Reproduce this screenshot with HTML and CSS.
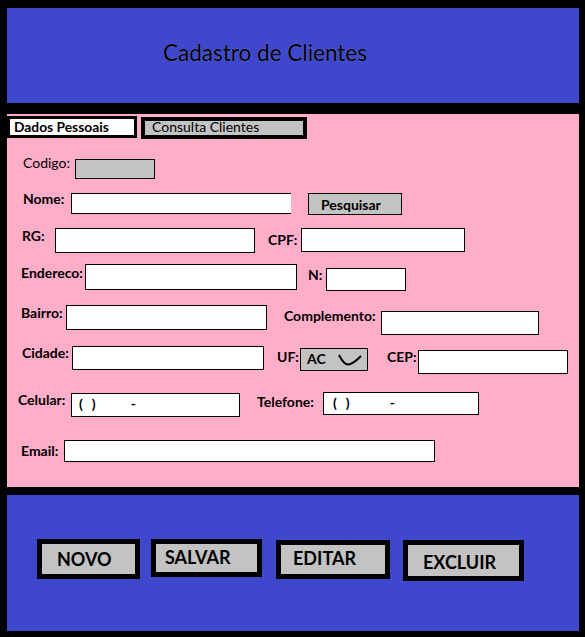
FILE: index.html
```html
<!DOCTYPE html>
<html lang="pt-BR">
<head>
<meta charset="utf-8">
<title>Cadastro de Clientes</title>
<link rel="stylesheet" href="styles.css">
</head>
<body>
<div class="frame">
  <header class="top">
    <h1 class="title">Cadastro de Clientes</h1>
  </header>

  <section class="form">
    <div class="tabs">
      <div class="tab tab-active">Dados Pessoais</div>
      <div class="tab tab-other">Consulta Clientes</div>
    </div>

    <div class="row r-codigo">
      <span class="lbl lbl-reg l-codigo">Codigo:</span>
      <div class="box box-grey f-codigo"></div>
    </div>

    <div class="row r-nome">
      <span class="lbl l-nome">Nome:</span>
      <div class="box f-nome"></div>
      <div class="btn-pesquisar">Pesquisar</div>
    </div>

    <div class="row r-rg">
      <span class="lbl l-rg">RG:</span>
      <div class="box f-rg"></div>
      <span class="lbl l-cpf">CPF:</span>
      <div class="box f-cpf"></div>
    </div>

    <div class="row r-end">
      <span class="lbl l-end">Endereco:</span>
      <div class="box f-end"></div>
      <span class="lbl l-num">N:</span>
      <div class="box f-num"></div>
    </div>

    <div class="row r-bairro">
      <span class="lbl l-bairro">Bairro:</span>
      <div class="box f-bairro"></div>
      <span class="lbl l-compl">Complemento:</span>
      <div class="box f-compl"></div>
    </div>

    <div class="row r-cidade">
      <span class="lbl l-cidade">Cidade:</span>
      <div class="box f-cidade"></div>
      <span class="lbl l-uf">UF:</span>
      <div class="box box-grey f-uf">
        <span class="uf-val">AC</span>
        <svg class="uf-arrow" width="24" height="12" viewBox="0 0 24 12"><path d="M1 1 C3 5 6 10.5 10 10.5 C14 10.5 19 6 23 2" fill="none" stroke="#000" stroke-width="2"/></svg>
      </div>
      <span class="lbl l-cep">CEP:</span>
      <div class="box f-cep"></div>
    </div>

    <div class="row r-cel">
      <span class="lbl l-cel">Celular:</span>
      <div class="box phone f-cel"><span class="p-open">(</span><span class="p-close">)</span><span class="p-dash">-</span></div>
      <span class="lbl l-tel">Telefone:</span>
      <div class="box phone f-tel"><span class="p-open">(</span><span class="p-close">)</span><span class="p-dash">-</span></div>
    </div>

    <div class="row r-email">
      <span class="lbl l-email">Email:</span>
      <div class="box f-email"></div>
    </div>
  </section>

  <footer class="actions">
    <div class="act act-novo">NOVO</div>
    <div class="act act-salvar">SALVAR</div>
    <div class="act act-editar">EDITAR</div>
    <div class="act act-excluir">EXCLUIR</div>
  </footer>
</div>
</body>
</html>
```

FILE: styles.css
```css
* { box-sizing: border-box; }

html, body {
  margin: 0;
  padding: 0;
  background: #000;
}

body {
  font-family: "Lato", "Liberation Sans", sans-serif;
  color: #000;
  width: 585px;
  height: 637px;
  overflow: hidden;
}

.frame {
  padding: 8px 6px 6px 7px;
  display: flex;
  flex-direction: column;
}

/* Header */
.top {
  height: 95px;
  background: #3f48cc;
  padding: 32px 0 0 156px;
}

.title {
  margin: 0;
  font-size: 22.5px;
  line-height: 26px;
  font-weight: 400;
  color: #000;
  white-space: nowrap;
  text-shadow: 0 0 1px rgba(255, 255, 220, 0.35);
}

/* Pink form */
.form {
  margin-top: 11px;
  height: 373px;
  background: #ffaec9;
  display: flex;
  flex-direction: column;
}

.tabs {
  display: flex;
  align-items: flex-start;
  height: 23px;
  margin-top: 2px;
}

.tab {
  height: 22px;
  font-size: 13.5px;
  line-height: 16px;
  white-space: nowrap;
  border: 3px solid #000;
}

.tab-active {
  width: 130px;
  background: #fff;
  font-weight: 700;
  font-size: 13.8px;
  padding: 0 0 0 4px;
}

.tab-other {
  width: 166px;
  margin-left: 4px;
  margin-top: 1px;
  border-width: 4px;
  background: #c3c3c3;
  padding: 0 0 0 7px;
  font-size: 14px;
  line-height: 12px;
}

.row {
  display: flex;
  align-items: flex-start;
}

.lbl {
  display: block;
  flex: none;
  font-size: 14px;
  line-height: 16px;
  height: 16px;
  font-weight: 700;
  white-space: nowrap;
}

.lbl-reg { font-weight: 400; }

.box {
  flex: none;
  background: #fff;
  border: 1px solid #000;
}

.box-grey { background: #c3c3c3; }

/* row: codigo */
.r-codigo { margin-top: 16px; height: 24px; padding-left: 16px; }
.l-codigo { width: 52px; }
.f-codigo { width: 80px; height: 20px; margin-top: 4px; }

/* row: nome */
.r-nome { margin-top: 12px; height: 24px; padding-left: 16px; }
.l-nome { width: 48px; }
.f-nome { width: 220px; height: 21px; margin-top: 2px; border-right: none; }
.btn-pesquisar {
  flex: none;
  margin-left: 17px;
  margin-top: 2px;
  width: 94px;
  height: 22px;
  background: #c3c3c3;
  border: 1px solid #000;
  font-size: 14px;
  line-height: 16px;
  font-weight: 700;
  padding: 3px 0 0 12px;
}

/* row: rg / cpf */
.r-rg { margin-top: 13px; height: 25px; padding-left: 15px; }
.l-rg { width: 33px; }
.f-rg { width: 200px; height: 25px; }
.l-cpf { width: 33px; margin-left: 13px; margin-top: 4px; }
.f-cpf { width: 164px; height: 24px; }

/* row: endereco / numero */
.r-end { margin-top: 11px; height: 27px; padding-left: 14px; }
.l-end { width: 64px; margin-top: 1px; }
.f-end { width: 212px; height: 26px; }
.l-num { width: 18px; margin-left: 11px; margin-top: 3px; }
.f-num { width: 80px; height: 23px; margin-top: 4px; }

/* row: bairro / complemento */
.r-bairro { margin-top: 14px; height: 30px; padding-left: 14px; }
.l-bairro { width: 45px; }
.f-bairro { width: 201px; height: 25px; }
.l-compl { width: 97px; margin-left: 17px; margin-top: 3px; }
.f-compl { width: 158px; height: 24px; margin-top: 6px; }

/* row: cidade / uf / cep */
.r-cidade { margin-top: 10px; height: 29px; padding-left: 15px; }
.l-cidade { width: 50px; }
.f-cidade { width: 192px; height: 24px; margin-top: 1px; }
.l-uf { width: 23px; margin-left: 13px; margin-top: 4px; }
.f-uf {
  width: 68px;
  height: 23px;
  margin-top: 3px;
  display: flex;
  align-items: flex-start;
  padding: 2px 0 0 6px;
}
.uf-val {
  font-size: 14px;
  line-height: 16px;
  font-weight: 700;
}
.uf-arrow {
  display: block;
  margin-left: 12px;
  margin-top: 3px;
}
.l-cep { width: 31px; margin-left: 19px; margin-top: 4px; }
.f-cep { width: 150px; height: 24px; margin-top: 5px; }

/* row: celular / telefone */
.r-cel { margin-top: 18px; height: 25px; padding-left: 11px; }
.l-cel { width: 53px; }
.f-cel { width: 169px; height: 24px; margin-top: 1px; }
.l-tel { width: 66px; margin-left: 17px; margin-top: 2px; }
.f-tel { width: 156px; height: 23px; }

.phone {
  display: flex;
  align-items: flex-start;
  font-size: 14px;
  line-height: 16px;
  font-weight: 700;
  padding-top: 2px;
}
.f-cel .p-open { margin-left: 7px; }
.f-cel .p-close { margin-left: 9px; }
.f-cel .p-dash { margin-left: 35px; }
.f-tel .p-open { margin-left: 9px; }
.f-tel .p-close { margin-left: 9px; }
.f-tel .p-dash { margin-left: 40px; }

/* row: email */
.r-email { margin-top: 23px; height: 22px; padding-left: 14px; }
.l-email { width: 43px; margin-top: 3px; }
.f-email { width: 371px; height: 22px; }

/* Footer actions */
.actions {
  margin-top: 8px;
  height: 136px;
  background: #3f48cc;
  display: flex;
  align-items: flex-start;
  padding: 44px 0 0 30px;
}

.act {
  flex: none;
  background: #c3c3c3;
  border: 5px solid #000;
  font-size: 18px;
  line-height: 20px;
  font-weight: 700;
  white-space: nowrap;
}

.act-novo { width: 103px; height: 40px; padding: 5px 0 0 15px; }
.act-salvar { width: 111px; height: 38px; margin-left: 11px; padding: 3px 0 0 9px; }
.act-editar { width: 114px; height: 39px; margin-left: 14px; margin-top: 1px; padding: 3px 0 0 12px; }
.act-excluir { width: 121px; height: 41px; margin-left: 13px; margin-top: 1px; padding: 7px 0 0 15px; }
```
